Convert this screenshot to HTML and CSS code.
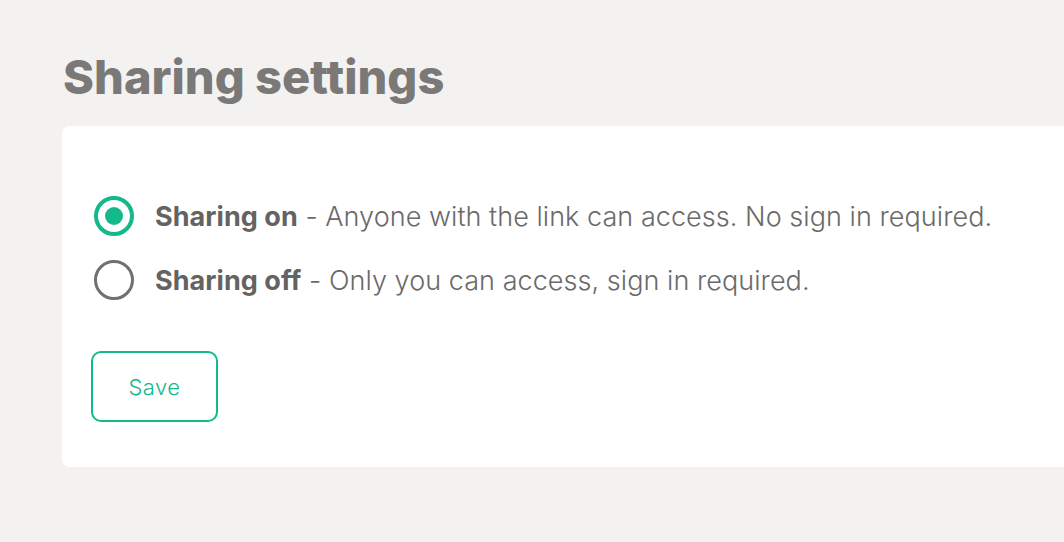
FILE: index.html
```html
<!DOCTYPE html>
<html>
<head>
<meta charset="utf-8">
<link rel="stylesheet" href="styles.css">
</head>
<body>
<main class="page">
  <h1 class="title">Sharing settings</h1>
  <section class="card">
    <div class="options">
      <label class="option">
        <span class="radio radio-on"><span class="dot"></span></span>
        <span class="label"><b>Sharing on</b> - Anyone with the link can access. No sign in required.</span>
      </label>
      <label class="option">
        <span class="radio"></span>
        <span class="label"><b>Sharing off</b> - Only you can access, sign in required.</span>
      </label>
    </div>
    <button class="save">Save</button>
  </section>
</main>
</body>
</html>
```
FILE: styles.css
```css
html, body {
  margin: 0;
  padding: 0;
  background: #f3f2f0;
  overflow: hidden;
}
body {
  font-family: Inter, "Noto Sans", sans-serif;
  width: 1064px;
  height: 542px;
}
.page {
  padding: 48px 0 0 62px;
}
.title {
  margin: 0 0 0 1px;
  font-size: 47px;
  line-height: 57px;
  font-weight: 800;
  color: #7a7978;
}
.card {
  margin-top: 21px;
  background: #fff;
  border-radius: 8px 0 0 8px;
  padding: 70px 0 45px 29px;
}
.options {
  display: flex;
  flex-direction: column;
  gap: 24px;
}
.option {
  display: flex;
  align-items: center;
  gap: 21px;
  height: 40px;
  color: #6a6a6a;
  font-size: 27px;
  font-weight: 300;
  letter-spacing: 0.05px;
}
.option b {
  font-weight: 700;
  color: #636363;
}
.radio {
  flex: none;
  width: 40px;
  height: 40px;
  box-sizing: border-box;
  border: 3px solid #707070;
  border-radius: 50%;
  display: flex;
  align-items: center;
  justify-content: center;
  margin-left: 3px;
}
.radio-on {
  border: 4px solid #13b98b;
}
.dot {
  width: 18px;
  height: 18px;
  border-radius: 50%;
  background: #13b98b;
}
.save {
  display: block;
  margin-top: 51px;
  width: 127px;
  height: 71px;
  border: 2px solid #13b98b;
  border-radius: 10px;
  background: #fff;
  color: #13b98b;
  font-family: Inter, "Noto Sans", sans-serif;
  font-size: 22px;
  font-weight: 300;
  letter-spacing: 0.5px;
}
```
